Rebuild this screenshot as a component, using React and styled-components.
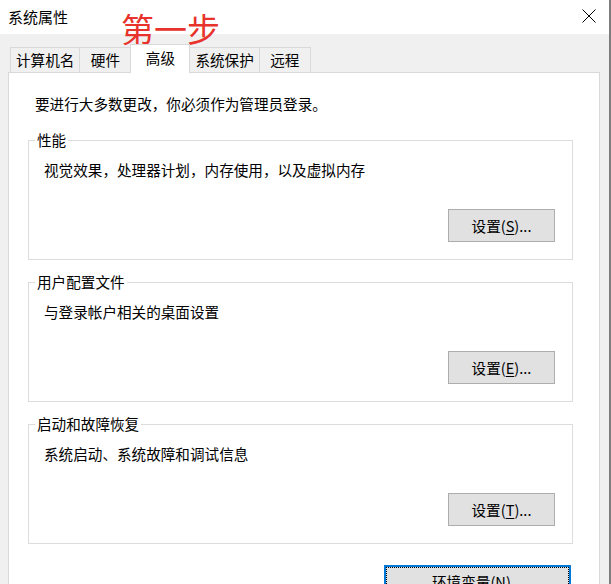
import React from 'react'
import styled, { createGlobalStyle } from 'styled-components'

const GlobalStyle = createGlobalStyle`
    html, body {
        margin : 0;
        padding : 0;
        background : #f0f0f0;
    }
    body {
        font-family : "Noto Sans CJK SC", "Liberation Sans", sans-serif;
    }
`;

const tabs = ["计算机名", "硬件", "高级", "系统保护", "远程"];

const groups = [
    { title : "性能", text : "视觉效果，处理器计划，内存使用，以及虚拟内存", key : "S" },
    { title : "用户配置文件", text : "与登录帐户相关的桌面设置", key : "E" },
    { title : "启动和故障恢复", text : "系统启动、系统故障和调试信息", key : "T" },
];

const CloseIcon = () => (
    <svg width="14" height="14" viewBox="0 0 14 14">
        <path d="M0.5 0.5 L13.5 13.5 M13.5 0.5 L0.5 13.5" stroke="#000" strokeWidth="1" fill="none" />
    </svg>
);

const App = () => {
    return (<>
        <GlobalStyle />
        <Window>
            <TitleBar>
                <h1>系统属性</h1>
                <CloseButton><CloseIcon /></CloseButton>
            </TitleBar>
            <Annotation>第一步</Annotation>
            <Body>
                <TabStrip>
                    {
                        tabs.map((tab, index) => (
                            <Tab key={index} $active={tab === "高级"}>{tab}</Tab>
                        ))
                    }
                </TabStrip>
                <Panel>
                    <Intro>要进行大多数更改，你必须作为管理员登录。</Intro>
                    {
                        groups.map((group) => (
                            <Group key={group.key}>
                                <legend>{group.title}</legend>
                                <p>{group.text}</p>
                                <ButtonRow>
                                    <Button>设置(<u>{group.key}</u>)...</Button>
                                </ButtonRow>
                            </Group>
                        ))
                    }
                    <ButtonRow $gap={21} $inset={2}>
                        <Button $wide $focused>环境变量(<u>N</u>)...</Button>
                    </ButtonRow>
                </Panel>
            </Body>
        </Window>
    </>);
}

const Window = styled.div`
    position : relative;
    box-sizing : border-box;
    width : 611px;
    height : 584px;
    overflow : hidden;
    display : flex;
    flex-direction : column;
    background : #f0f0f0;
    border-right : 2px solid #7d7d7d;
    color : #000;
`;

const TitleBar = styled.div`
    height : 34px;
    flex : none;
    display : flex;
    align-items : center;
    justify-content : space-between;
    padding : 0 12px 0 8px;
    background : #fff;
    h1 {
        margin : 0;
        font-size : 15px;
        font-weight : normal;
        line-height : 20px;
    }
`;

const CloseButton = styled.div`
    display : flex;
    align-items : center;
    justify-content : center;
    width : 16px;
    height : 16px;
    margin-top : -2px;
`;

const Annotation = styled.div`
    position : absolute;
    left : 121px;
    top : 8px;
    font-size : 33px;
    line-height : 40px;
    color : #e8322c;
    letter-spacing : 0;
`;

const Body = styled.div`
    flex : 1;
    display : flex;
    flex-direction : column;
    padding : 10px 9px 0 8px;
`;

const TabStrip = styled.div`
    display : flex;
    align-items : flex-end;
    height : 28px;
    padding-left : 2px;
    position : relative;
    z-index : 1;
`;

const Tab = styled.div`
    box-sizing : border-box;
    min-width : ${props => props.$active ? "60px" : "52px"};
    height : ${props => props.$active ? "29px" : "25px"};
    margin-bottom : ${props => props.$active ? "-1px" : "0"};
    padding : 0 5px ${props => props.$active ? "3px" : "0"};
    display : flex;
    align-items : center;
    justify-content : center;
    border : 1px solid #d9d9d9;
    border-bottom : none;
    background : ${props => props.$active ? "#fff" : "#f0f0f0"};
    font-size : 14.6px;
    line-height : 20px;
    & + & {
        margin-left : -1px;
    }
`;

const Panel = styled.div`
    flex : 1;
    background : #fff;
    border : 1px solid #d9d9d9;
    padding : 21px 26px 0 19px;
`;

const Intro = styled.p`
    margin : 0 0 0 7px;
    font-size : 14.6px;
    line-height : 20px;
`;

const Group = styled.fieldset`
    margin : 18px 0 0;
    min-width : 0;
    padding : 12px 17px 17px 15px;
    border : 1px solid #dcdcdc;
    & + & {
        margin-top : 14px;
    }
    legend {
        margin-left : -9px;
        padding : 0 2px;
        font-size : 14.6px;
        line-height : 16px;
    }
    p {
        margin : 0;
        font-size : 14.6px;
        line-height : 20px;
    }
`;

const ButtonRow = styled.div`
    display : flex;
    justify-content : flex-end;
    margin-top : ${props => props.$gap || 29}px;
    padding-right : ${props => props.$inset || 0}px;
`;

const Button = styled.button`
    box-sizing : border-box;
    width : ${props => props.$wide ? "187px" : "107px"};
    height : 33px;
    padding : 0;
    background : #e1e1e1;
    border : 1px solid ${props => props.$focused ? "#0078d7" : "#adadad"};
    box-shadow : ${props => props.$focused ? "inset 0 0 0 1px #0078d7" : "none"};
    outline : ${props => props.$focused ? "1px dotted #000" : "none"};
    outline-offset : -3px;
    font-family : "Noto Sans CJK SC", "Liberation Sans", sans-serif;
    font-size : 14.6px;
    line-height : 20px;
    color : #000;
    u {
        text-underline-offset : 2px;
    }
`;

export default App;
